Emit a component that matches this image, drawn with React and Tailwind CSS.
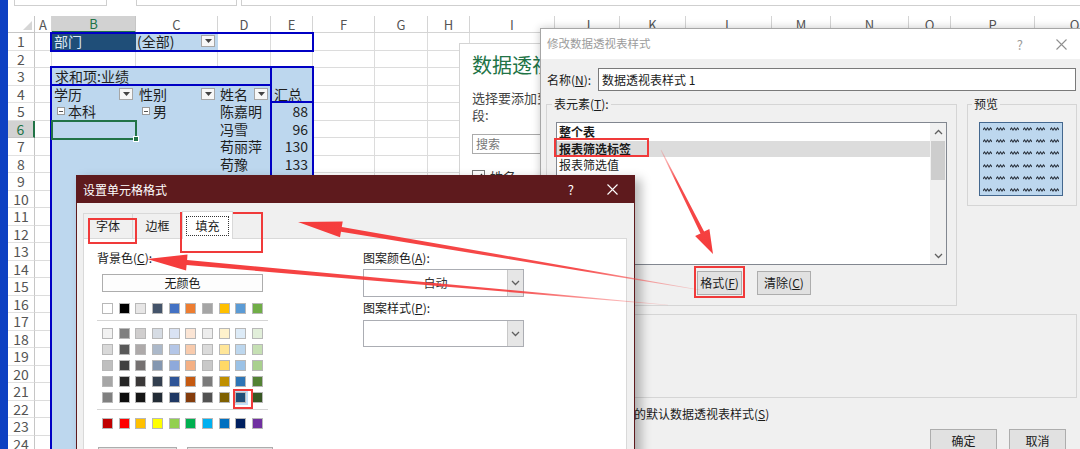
import React from 'react'

const COLS = [
  { k: 'A', w: 'w-[17px]' }, { k: 'B', w: 'w-[84px]' }, { k: 'C', w: 'w-[82px]' }, { k: 'D', w: 'w-[53px]' },
  { k: 'E', w: 'w-[42px]' }, { k: 'F', w: 'w-[62px]' }, { k: 'G', w: 'w-[53px]' }, { k: 'H', w: 'w-[42px]' },
  { k: 'I', w: 'w-[85px]' }, { k: 'J', w: 'w-[65px]' }, { k: 'K', w: 'w-[66px]' }, { k: 'L', w: 'w-[86px]' },
  { k: 'M', w: 'w-[59px]' }, { k: 'N', w: 'w-[78px]' }, { k: 'O', w: 'w-[42px]' }, { k: 'P', w: 'w-[84px]' },
  { k: 'Q', w: 'w-[80px]' },
]

function Dd({ cls = '' }) {
  return (
    <span className={`w-[14px] h-[12px] border border-[#a6a6a6] bg-[#f7f7f7] flex items-center justify-center shrink-0 ${cls}`}>
      <svg width="7" height="4" viewBox="0 0 7 4"><path d="M0 0h7L3.5 4z" fill="#444" /></svg>
    </span>
  )
}

function Minus({ cls = '' }) {
  return (
    <span className={`w-[8px] h-[8px] border border-[#9a9a9a] bg-white flex items-center justify-center shrink-0 ${cls}`}>
      <span className="w-[4px] h-px bg-[#555]" />
    </span>
  )
}

const DATA = {
  1: {
    B: { fill: 'dk', c: <span className="pl-[2px] text-[#dde9f5]">部门</span> },
    C: { fill: 'pv', c: <><span className="pl-[1px]">(全部)</span><Dd cls="ml-auto mr-[2px]" /></> },
  },
  3: { B: { c: <span className="relative z-[1] pl-[3px] whitespace-nowrap">求和项:业绩</span> } },
  4: {
    B: { c: <><span className="pl-[2px]">学历</span><Dd cls="ml-auto mr-[2px]" /></> },
    C: { c: <><span className="pl-[3px]">性别</span><Dd cls="ml-auto mr-[2px]" /></> },
    D: { c: <><span className="pl-[2px]">姓名</span><Dd cls="ml-auto mr-[2px]" /></> },
    E: { c: <span className="pl-[3px]">汇总</span> },
  },
  5: {
    B: { c: <><Minus cls="ml-[5px]" /><span className="ml-[3px]">本科</span></> },
    C: { c: <><Minus cls="ml-[6px]" /><span className="ml-[3px]">男</span></> },
    D: { c: <span className="pl-[2px] whitespace-nowrap">陈嘉明</span> },
    E: { c: <span className="ml-auto pr-[4px]">88</span> },
  },
  6: { D: { c: <span className="pl-[2px]">冯雪</span> }, E: { c: <span className="ml-auto pr-[4px]">96</span> } },
  7: { D: { c: <span className="pl-[2px] whitespace-nowrap">苟丽萍</span> }, E: { c: <span className="ml-auto pr-[4px]">130</span> } },
  8: { D: { c: <span className="pl-[2px]">苟豫</span> }, E: { c: <span className="ml-auto pr-[4px]">133</span> } },
}

function Row({ n }) {
  const d = DATA[n] || {}
  const sel = n === 6
  return (
    <div className="flex h-[17.5px] shrink-0">
      <div className={`w-[27px] shrink-0 flex items-center justify-center text-[14px] leading-none border-b ${sel ? 'bg-[#d2d2d2] text-[#217346] border-r-2 border-r-[#217346] border-b-[#c4c4c4]' : 'bg-white text-[#555] border-r border-r-[#c6c6c6] border-b-[#e1e1e1]'}`}>{n}</div>
      {COLS.map((col) => {
        const cell = d[col.k] || {}
        let fill = cell.fill
        if (!fill && n >= 3 && 'BCDE'.includes(col.k)) fill = 'pv'
        const bg = fill === 'pv'
          ? 'bg-[#bdd7ee] border-[#bdd7ee]'
          : fill === 'dk'
            ? 'bg-[#1f4e78] border-[#1f4e78]'
            : 'bg-white border-[#dcdcdc]'
        return (
          <div key={col.k} className={`${col.w} shrink-0 h-full border-r border-b ${bg} flex items-center text-[14px] leading-none text-[#1e1e1e]`}>
            {cell.c}
          </div>
        )
      })}
    </div>
  )
}

function XIcon({ color }) {
  return (
    <svg width="11" height="11" viewBox="0 0 11 11">
      <path d="M0.5 0.5l10 10M10.5 0.5l-10 10" stroke={color} strokeWidth="1.1" />
    </svg>
  )
}

function Chev({ up }) {
  return (
    <svg width="9" height="6" viewBox="0 0 9 6">
      <path d={up ? 'M1 5L4.5 1.5L8 5' : 'M1 1L4.5 4.5L8 1'} stroke="#606060" strokeWidth="1.3" fill="none" />
    </svg>
  )
}

const TOP = ['bg-[#ffffff]', 'bg-[#000000]', 'bg-[#e7e6e6]', 'bg-[#44546a]', 'bg-[#4472c4]', 'bg-[#ed7d31]', 'bg-[#a5a5a5]', 'bg-[#ffc000]', 'bg-[#5b9bd5]', 'bg-[#70ad47]']
const THEME = [
  ['bg-[#f2f2f2]', 'bg-[#7f7f7f]', 'bg-[#d0cece]', 'bg-[#d6dce4]', 'bg-[#d9e2f3]', 'bg-[#fbe5d5]', 'bg-[#ededed]', 'bg-[#fff2cc]', 'bg-[#ddebf7]', 'bg-[#e2efda]'],
  ['bg-[#d9d9d9]', 'bg-[#595959]', 'bg-[#aeaaaa]', 'bg-[#acb9ca]', 'bg-[#b4c6e7]', 'bg-[#f8cbad]', 'bg-[#dbdbdb]', 'bg-[#ffe699]', 'bg-[#bdd7ee]', 'bg-[#c6e0b4]'],
  ['bg-[#bfbfbf]', 'bg-[#404040]', 'bg-[#757171]', 'bg-[#8497b0]', 'bg-[#8ea9db]', 'bg-[#f4b084]', 'bg-[#c9c9c9]', 'bg-[#ffd966]', 'bg-[#9bc2e6]', 'bg-[#a9d08e]'],
  ['bg-[#a6a6a6]', 'bg-[#262626]', 'bg-[#3a3838]', 'bg-[#333f4f]', 'bg-[#2f5597]', 'bg-[#c55a11]', 'bg-[#7b7b7b]', 'bg-[#bf8f00]', 'bg-[#2e75b6]', 'bg-[#548235]'],
  ['bg-[#808080]', 'bg-[#0d0d0d]', 'bg-[#161616]', 'bg-[#222b35]', 'bg-[#1f3864]', 'bg-[#843c0c]', 'bg-[#525252]', 'bg-[#7f6000]', 'bg-[#1f4e78]', 'bg-[#375623]'],
]
const STD = ['bg-[#c00000]', 'bg-[#ff0000]', 'bg-[#ffc000]', 'bg-[#ffff00]', 'bg-[#92d050]', 'bg-[#00b050]', 'bg-[#00b0f0]', 'bg-[#0070c0]', 'bg-[#002060]', 'bg-[#7030a0]']

function Swatches({ list, selected = -1 }) {
  return (
    <div className="flex gap-[5.67px] ml-[5px] h-[11px]">
      {list.map((c, i) => (
        <span key={i} className={`w-[11px] h-[11px] border border-[#b8b8b8] ${c} ${i === selected ? 'ring-2 ring-[#c4dff6]' : ''}`} />
      ))}
    </div>
  )
}

function Select({ h, text }) {
  return (
    <div className={`w-[161px] ${h} bg-white border border-[#abadb3] flex`}>
      <div className="flex-1 flex items-center justify-center text-[#333]">{text}</div>
      <div className="w-[16px] bg-[#e6e6e6] border-l border-[#c8c8c8] flex items-center justify-center"><Chev /></div>
    </div>
  )
}

function arrowPts(x1, y1, x2, y2, w1, w2, L, H) {
  const dx = x2 - x1
  const dy = y2 - y1
  const len = Math.hypot(dx, dy)
  const ux = dx / len
  const uy = dy / len
  const nx = -uy
  const ny = ux
  const bx = x2 - ux * L
  const by = y2 - uy * L
  const p = [
    [x1 + (nx * w1) / 2, y1 + (ny * w1) / 2],
    [bx + (nx * w2) / 2, by + (ny * w2) / 2],
    [bx + nx * H, by + ny * H],
    [x2, y2],
    [bx - nx * H, by - ny * H],
    [bx - (nx * w2) / 2, by - (ny * w2) / 2],
    [x1 - (nx * w1) / 2, y1 - (ny * w1) / 2],
  ]
  return p.map((q) => q.map((v) => v.toFixed(1)).join(',')).join(' ')
}

const ARROWS = [
  { id: 'a1', t: [661, 150], h: [713, 254], w1: 1, w2: 4, L: 24, H: 8 },
  { id: 'a2', t: [700, 290], h: [298, 222], w1: 0.6, w2: 5, L: 44, H: 8 },
  { id: 'a3', t: [668, 305], h: [147, 259], w1: 0.6, w2: 5, L: 40, H: 8 },
]

export default function App() {
  const rows = Array.from({ length: 24 }, (_, i) => i + 1)
  return (
    <div className="relative w-[1080px] h-[449px] overflow-hidden bg-white flex font-['Noto_Sans_CJK_SC','Noto_Sans',sans-serif]">
      <div className="w-[8px] shrink-0 bg-[#0d40c2]" />
      <div className="flex-1 flex flex-col overflow-hidden">
        <div className="h-[16px] flex items-start shrink-0">
          <div className="ml-[6px] w-[93px] h-[6px] border-x border-b border-[#cfcfcf]" />
          <div className="ml-[29px] w-[101px] h-[6px] border-x border-b border-[#cfcfcf]" />
          <div className="ml-[4px] flex-1 h-[6px] border-l border-b border-[#cfcfcf]" />
        </div>
        <div className="flex h-[17px] shrink-0">
          <div className="w-[27px] shrink-0 border-r border-b border-[#c6c6c6] bg-white flex items-end justify-end p-[2px]">
            <svg width="9" height="9" viewBox="0 0 9 9"><path d="M9 0V9H0z" fill="#d6d6d6" /></svg>
          </div>
          {COLS.map((col) => (
            <div key={col.k} className={`${col.w} shrink-0 flex items-center justify-center text-[13px] leading-none ${col.k === 'B' ? 'bg-[#d2d2d2] text-[#217346] border-b-2 border-b-[#217346] border-r border-r-[#c6c6c6]' : 'bg-white text-[#555] border-r border-b border-[#d4d4d4]'}`}>
              {col.k}
            </div>
          ))}
        </div>
        {rows.map((n) => <Row key={n} n={n} />)}
      </div>

      {/* pivot borders and active cell */}
      <div className="absolute left-[50px] top-[32px] w-[264px] h-[19.5px] border-2 border-[#0000c4]" />
      <div className="absolute left-[50px] top-[66px] w-[222px] h-[20px] border-2 border-[#0000c4]" />
      <div className="absolute left-[270px] top-[66px] w-[44px] h-[37px] border-2 border-[#0000c4]" />
      <div className="absolute left-[50px] top-[84px] w-[222px] h-[400px] border-2 border-[#0000c4]" />
      <div className="absolute left-[270px] top-[101px] w-[44px] h-[400px] border-2 border-[#0000c4]" />
      <div className="absolute left-[51px] top-[119.5px] w-[86px] h-[20px] border-2 border-[#217346]" />
      <div className="absolute left-[133px] top-[135.5px] w-[6px] h-[6px] bg-[#217346] border border-white" />

      {/* pivot field list */}
      <div className="absolute left-[459px] top-[43px] w-[260px] h-[220px] bg-white border border-[#d4d4d4] pl-[12px] flex flex-col">
        <div className="mt-[11px] text-[20px] leading-none text-[#217346] whitespace-nowrap">数据透视表字段</div>
        <div className="mt-[14px] text-[13px] leading-[17px] text-[#444] whitespace-nowrap">选择要添加到报表的字</div>
        <div className="text-[13px] leading-[17px] text-[#444]">段:</div>
        <div className="mt-[11px] w-[200px] h-[20px] border border-[#ababab] flex items-center pl-[3px] text-[12px] text-[#777]">搜索</div>
        <div className="mt-[13px] flex items-center gap-[5px] text-[13px] text-[#333]">
          <span className="w-[13px] h-[13px] border border-[#777] flex items-center justify-center">
            <svg width="9" height="8" viewBox="0 0 9 8"><path d="M1 4l2.5 2.5L8 1" stroke="#333" strokeWidth="1.2" fill="none" /></svg>
          </span>
          姓名
        </div>
      </div>

      {/* 修改数据透视表样式 */}
      <div className="absolute left-[540px] top-[28px] w-[545px] h-[430px] flex flex-col border border-[#a6a6a6] bg-[#f0f0f0] shadow-[0_0_8px_rgba(0,0,0,0.22)] text-[12px] leading-none text-[#1a1a1a]">
        <div className="h-[30px] shrink-0 bg-white flex items-center pl-[6px]">
          <span className="text-[11.5px] text-[#9b9b9b]">修改数据透视表样式</span>
          <span className="ml-auto text-[13px] text-[#9b9b9b]">?</span>
          <span className="ml-[33px] mr-[17px] flex"><XIcon color="#8f8f8f" /></span>
        </div>
        <div className="flex items-center h-[23px] mt-[9px]">
          <span className="w-[57px] pl-[6px]">名称(<u>N</u>):</span>
          <div className="w-[478px] h-full bg-white border border-[#7a7a7a] flex items-center pl-[3px]">数据透视表样式 1</div>
        </div>
        <div className="flex mt-[5px] ml-[5px] gap-[10px]">
          <fieldset className="w-[411px] h-[210px] border border-[#d5d5d5] pl-[9px]">
            <legend className="-ml-[4px] px-[2px] leading-[16px]">表元素(<u>T</u>):</legend>
            <div className="mt-[10px] w-[391px] h-[143px] bg-white border border-[#828790] flex">
              <div className="flex-1 pt-[1px]">
                <div className="h-[16.5px] flex items-center pl-[2px] font-bold">整个表</div>
                <div className="h-[16.5px] flex items-center pl-[2px] font-bold bg-[#dcdcdc]">报表筛选标签</div>
                <div className="h-[16.5px] flex items-center pl-[2px]">报表筛选值</div>
                <div className="h-[16.5px] flex items-center pl-[2px]">第一列条纹</div>
              </div>
              <div className="w-[16px] bg-[#f0f0f0] flex flex-col items-center">
                <div className="h-[17px] flex items-center justify-center"><Chev up /></div>
                <div className="w-[14px] h-[39px] bg-[#cdcdcd] mt-[1px]" />
                <div className="flex-1" />
                <div className="h-[17px] flex items-center justify-center"><Chev /></div>
              </div>
            </div>
            <div className="flex mt-[6px] ml-[141px] gap-[15px]">
              <div className="w-[45px] h-[24px] bg-[#e1e1e1] border border-[#adadad] flex items-center justify-center">格式(<u>F</u>)</div>
              <div className="w-[54px] h-[24px] bg-[#e1e1e1] border border-[#adadad] flex items-center justify-center">清除(<u>C</u>)</div>
            </div>
          </fieldset>
          <fieldset className="w-[110px] h-[110px] border border-[#d5d5d5] pl-[11px]">
            <legend className="-ml-[7px] px-[2px] leading-[16px]">预览</legend>
            <div className="mt-[10px] w-[84px] h-[74px] bg-[#bdd7ee] border border-[#44688f] grid grid-cols-6 content-start px-[1px]">
              {Array.from({ length: 36 }, (_, i) => (
                <div key={i} className="h-[12.2px] flex items-center justify-center">
                  <svg width="9" height="4" viewBox="0 0 9 4"><polyline points="0,3 1.5,1 3,3 4.5,1 6,3 7.5,1 9,3" stroke="#2f3742" strokeWidth="1.2" fill="none" /></svg>
                </div>
              ))}
            </div>
          </fieldset>
        </div>
        <div className="mt-[8px] ml-[5px] w-[531px] h-[84px] border border-[#d5d5d5] pl-[8px] pt-[6px] text-[#555]">元素格式:</div>
        <div className="flex items-center h-[16px] mt-[8px] ml-[17px]">
          <span className="w-[13px] h-[13px] border border-[#333] bg-white" />
          <span className="ml-[3px]">设为此文档的默认数据透视表样式(<u>S</u>)</span>
        </div>
        <div className="flex mt-[7px] ml-[389px] gap-[12px]">
          <div className="w-[67px] h-[24px] bg-[#e1e1e1] border border-[#adadad] flex items-center justify-center">确定</div>
          <div className="w-[57px] h-[24px] bg-[#e1e1e1] border border-[#adadad] flex items-center justify-center">取消</div>
        </div>
      </div>

      {/* 设置单元格格式 */}
      <div className="absolute left-[76px] top-[175px] w-[559px] h-[290px] flex flex-col border border-[#5e1a1d] bg-[#f0f0f0] shadow-[6px_4px_10px_rgba(0,0,0,0.28)] text-[12px] leading-none text-[#1a1a1a]">
        <div className="h-[27px] shrink-0 bg-[#5e1a1d] flex items-center pl-[6px] text-white">
          <span>设置单元格格式</span>
          <span className="ml-auto text-[13px]">?</span>
          <span className="ml-[33px] mr-[16px] flex"><XIcon color="#ffffff" /></span>
        </div>
        <div className="flex items-end h-[27px] mt-[8px] ml-[6px] shrink-0">
          <div className="w-[49px] h-[25px] border-t border-l border-[#d9d9d9] flex items-center justify-center">字体</div>
          <div className="w-[50px] h-[25px] border-t border-l border-[#d9d9d9] flex items-center justify-center">边框</div>
          <div className="w-[51px] h-[28px] -mb-px relative z-[1] bg-white border-t border-x border-[#d9d9d9] flex items-center justify-center">
            <span className="border border-dotted border-[#333] px-[8px] py-[3px]">填充</span>
          </div>
        </div>
        <div className="flex-1 ml-[6px] mr-[7px] bg-white border border-[#d9d9d9] flex">
          <div className="ml-[13px] w-[266px] flex flex-col">
            <div className="mt-[11px] h-[16px] flex items-center">背景色(<u>C</u>):</div>
            <div className="mt-[8px] ml-[5px] w-[161px] h-[18px] bg-[#fdfdfd] border border-[#adadad] flex items-center justify-center">无颜色</div>
            <div className="mt-[11px]"><Swatches list={TOP} /></div>
            <div className="mt-[6px] w-[171px] h-px bg-[#d5d5d5]" />
            <div className="mt-[7px] flex flex-col gap-[5px]">
              {THEME.map((r, i) => <Swatches key={i} list={r} selected={i === 4 ? 8 : -1} />)}
            </div>
            <div className="mt-[6px] w-[171px] h-px bg-[#d5d5d5]" />
            <div className="mt-[8px]"><Swatches list={STD} /></div>
            <div className="mt-[18px] ml-[1px] flex gap-[10px]">
              <div className="w-[79px] h-[24px] bg-[#e1e1e1] border border-[#adadad] flex items-center justify-center">填充效果(<u>I</u>)...</div>
              <div className="w-[86px] h-[24px] bg-[#e1e1e1] border border-[#adadad] flex items-center justify-center">其他颜色(<u>M</u>)...</div>
            </div>
          </div>
          <div className="flex flex-col">
            <div className="mt-[11px] h-[16px] flex items-center">图案颜色(<u>A</u>):</div>
            <div className="mt-[3px]"><Select h="h-[28px]" text="自动" /></div>
            <div className="mt-[3px] h-[16px] flex items-center">图案样式(<u>P</u>):</div>
            <div className="mt-[4px]"><Select h="h-[27px]" text="" /></div>
          </div>
        </div>
      </div>

      {/* red annotations */}
      <div className="absolute left-[554px] top-[138px] w-[95px] h-[19px] border-2 border-[#f03a3a]" />
      <div className="absolute left-[694px] top-[266px] w-[51px] h-[32px] border-2 border-[#f03a3a]" />
      <div className="absolute left-[88px] top-[218px] w-[49px] h-[26px] border-2 border-[#f03a3a]" />
      <div className="absolute left-[180px] top-[212px] w-[83px] h-[41px] border-2 border-[#f03a3a]" />
      <div className="absolute left-[233px] top-[389px] w-[20px] h-[20px] border-2 border-[#f03a3a]" />
      <svg className="absolute inset-0 pointer-events-none" width="1080" height="449">
        <defs>
          {ARROWS.map((a) => (
            <linearGradient key={a.id} id={a.id} gradientUnits="userSpaceOnUse" x1={a.t[0]} y1={a.t[1]} x2={a.h[0]} y2={a.h[1]}>
              <stop offset="0" stopColor="#f53b3b" stopOpacity="0.15" />
              <stop offset="0.3" stopColor="#f53b3b" stopOpacity="0.9" />
              <stop offset="1" stopColor="#f53b3b" stopOpacity="1" />
            </linearGradient>
          ))}
        </defs>
        {ARROWS.map((a) => (
          <polygon key={a.id} points={arrowPts(a.t[0], a.t[1], a.h[0], a.h[1], a.w1, a.w2, a.L, a.H)} fill={`url(#${a.id})`} />
        ))}
      </svg>
    </div>
  )
}
